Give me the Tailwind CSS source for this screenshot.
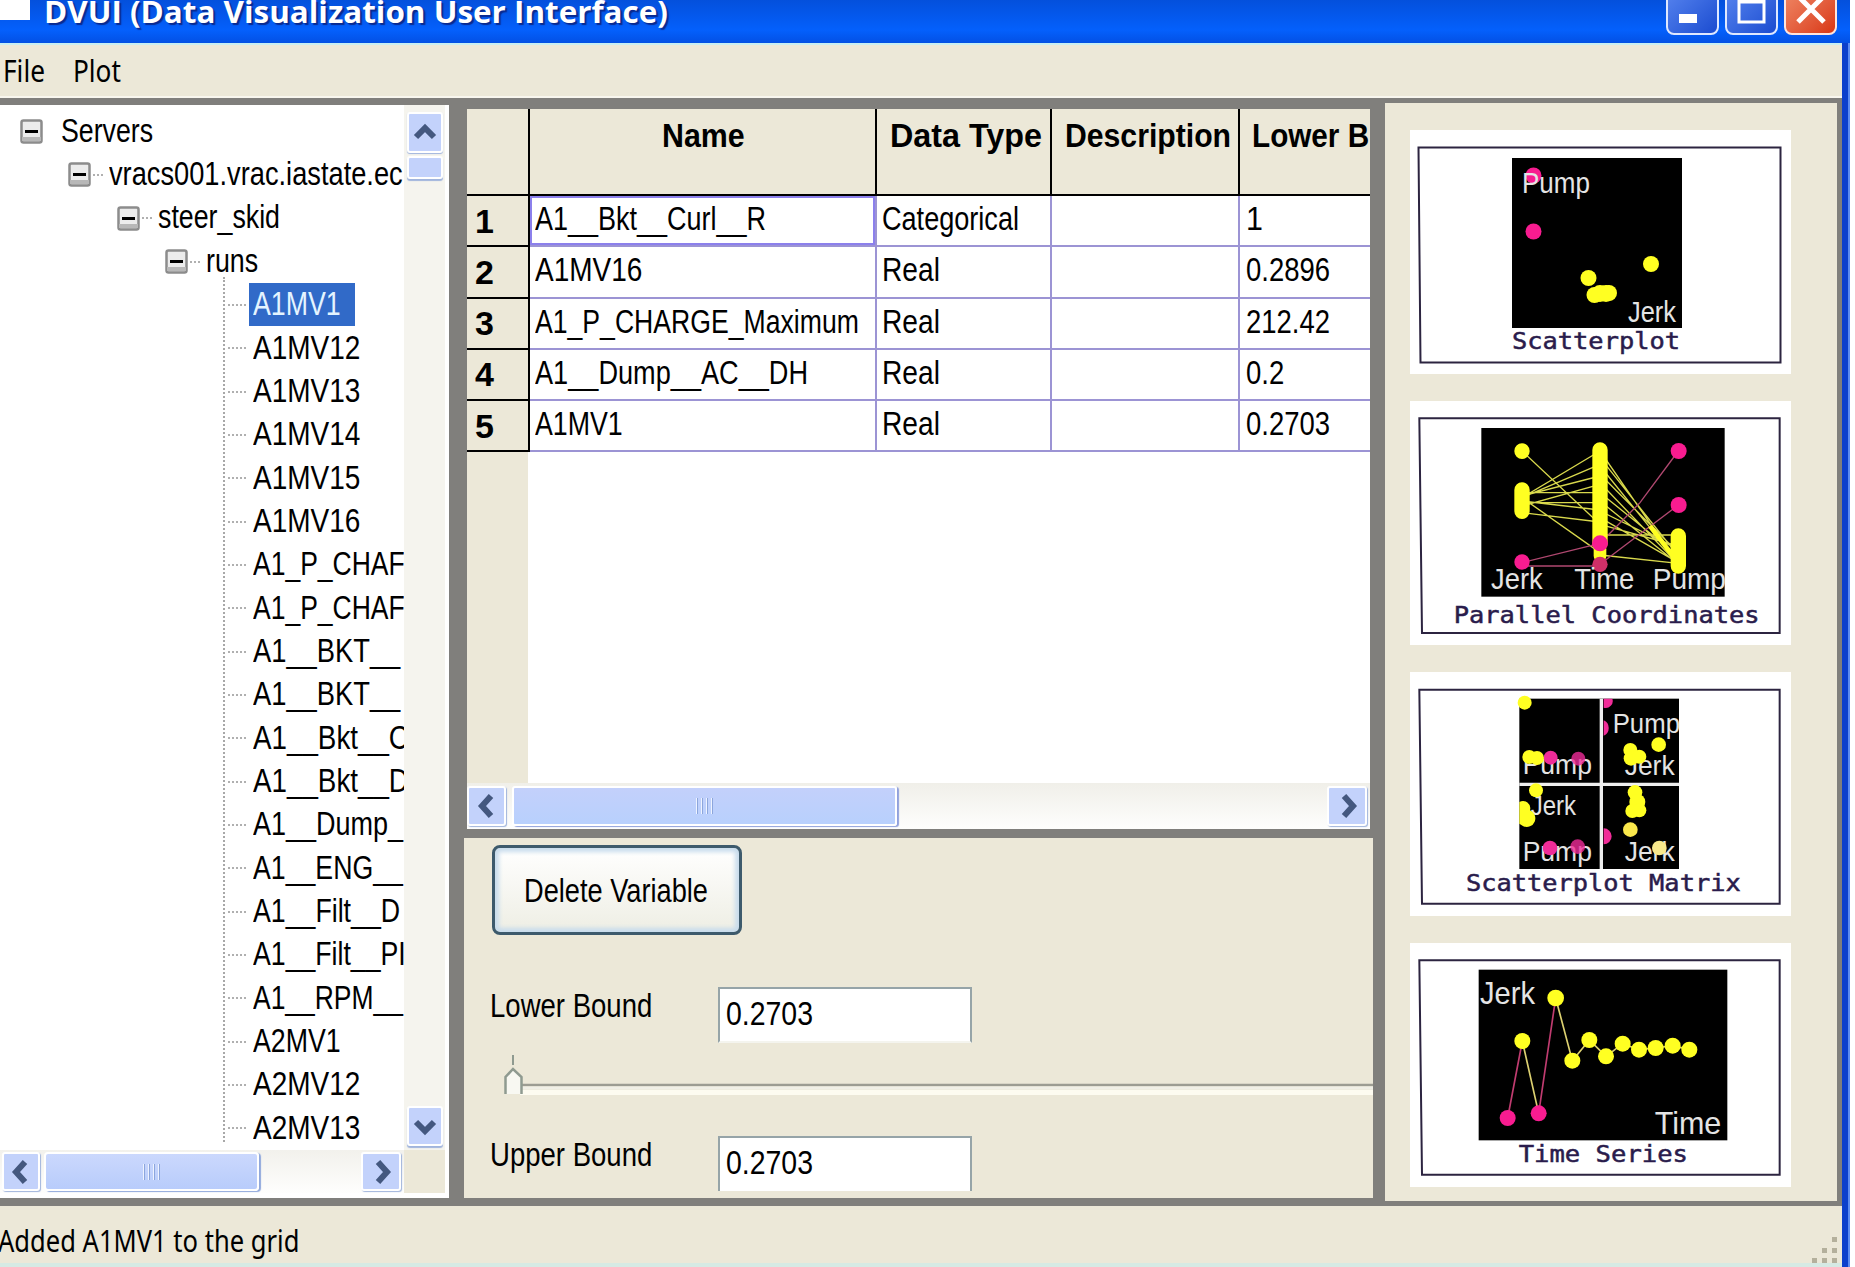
<!DOCTYPE html>
<html lang="en">
<head>
    <meta charset="UTF-8">
    <title>DVUI (Data Visualization User Interface)</title>
    <script src="https://cdn.jsdelivr.net/npm/@tailwindcss/browser@4"></script>
</head>
<body class="w-[1855px] h-[1267px] overflow-hidden bg-white font-['Liberation_Sans',sans-serif] text-[34px] leading-[34px] text-black">

<div class="w-[1850px] h-[1267px] bg-[#ece8d8] flex flex-col overflow-hidden">

    <!-- Title bar -->
    <header class="h-[43px] shrink-0 flex items-start justify-between overflow-hidden bg-linear-to-b from-[#0450dc] via-[#0460fc] via-70% to-[#0350e4] pr-[13px]">
        <div class="flex items-start">
            <div class="w-[30px] h-[20px] bg-white"></div>
            <h1 class="ml-[14px] -mt-[6px] font-['Open_Sans',sans-serif] font-bold text-[31px] text-white [text-shadow:2px_2px_1px_#0a2a90]"><span data-w="624">DVUI (Data Visualization User Interface)</span></h1>
        </div>
        <div class="flex gap-[6px] -mt-[16px]">
            <button class="w-[53px] h-[51px] rounded-[8px] border-2 border-[#dfe8ff] bg-linear-to-br from-[#5a86f0] to-[#1b4bd0]">
                <svg class="w-full h-full" viewBox="0 0 49 47"><rect x="11" y="28" width="18" height="9" fill="#fff"/></svg>
            </button>
            <button class="w-[53px] h-[51px] rounded-[8px] border-2 border-[#dfe8ff] bg-linear-to-br from-[#5a86f0] to-[#1b4bd0]">
                <svg class="w-full h-full" viewBox="0 0 49 47"><path d="M12 10h25v26h-25z" fill="none" stroke="#fff" stroke-width="3"/><path d="M11 15h27" stroke="#fff" stroke-width="5"/></svg>
            </button>
            <button class="w-[53px] h-[51px] rounded-[8px] border-2 border-[#ffe4dc] bg-linear-to-br from-[#f08a68] to-[#d83410]">
                <svg class="w-full h-full" viewBox="0 0 49 47"><path d="M12 10l26 26M38 10l-26 26" stroke="#fff" stroke-width="5"/></svg>
            </button>
        </div>
    </header>

    <div class="flex h-[1224px]">
        <div class="w-[1842px] flex flex-col">

            <!-- Menu -->
            <nav class="h-[55px] shrink-0 border-t-2 border-[#c9eef2] border-b-2 border-b-[#f8f6ee] flex items-center pl-[3px] font-['Noto_Sans',sans-serif] text-[30px]">
                <span class="w-[70px]"><span data-w="42">File</span></span>
                <span><span data-w="48">Plot</span></span>
            </nav>

            <!-- Panes -->
            <main class="h-[1108px] shrink-0 bg-[#807f7c] flex items-start">

                <!-- Server tree -->
                <section class="mt-[7px] w-[449px] h-[1093px] bg-white">
                    <div class="flex h-[1045px]">
                        <div class="relative w-[404px] h-[1045px] pt-[5px] overflow-hidden">
                            <div class="absolute left-[223px] top-[172px] h-[865px] border-l-2 border-dotted border-[#a8a8a8]"></div>
                            <div id="tree"></div>
                        </div>
                        <div class="w-[41px] h-[1045px] bg-[#f5f4ee] flex flex-col items-center">
                            <div class="mt-[7px] w-[36px] h-[41px] rounded-[3px] border-2 border-white bg-[#c3d2fb] shadow-[0_1px_1px_#a0b4dc]">
                                <svg class="w-full h-full" viewBox="0 0 32 37"><path d="M7 23l9-9 9 9" fill="none" stroke="#44587f" stroke-width="6"/></svg>
                            </div>
                            <div class="mt-[3px] w-[36px] h-[23px] rounded-[3px] border-2 border-white bg-[#c3d2fb] shadow-[0_2px_1px_#a0b4dc]"></div>
                            <div class="mt-auto mb-[4px] w-[36px] h-[40px] rounded-[3px] border-2 border-white bg-[#c3d2fb] shadow-[0_2px_1px_#a0b4dc]">
                                <svg class="w-full h-full" viewBox="0 0 32 36"><path d="M7 14l9 9 9-9" fill="none" stroke="#44587f" stroke-width="6"/></svg>
                            </div>
                        </div>
                    </div>
                    <div class="flex h-[43px]">
                        <div class="w-[404px] bg-linear-to-b from-[#f2f1ec] to-[#fefefd] flex items-center pl-[2px]">
                            <div class="w-[38px] h-[39px] rounded-[3px] border-2 border-white bg-[#c3d2fb] shadow-[1px_1px_1px_#a0b4dc]">
                                <svg class="w-full h-full" viewBox="0 0 34 35"><path d="M21 8l-9 10 9 10" fill="none" stroke="#44587f" stroke-width="6"/></svg>
                            </div>
                            <div class="ml-[4px] w-[215px] h-[39px] rounded-[4px] border-2 border-white bg-linear-to-b from-[#cbd8fd] to-[#b8ccfb] shadow-[2px_1px_1px_#90a8dc] flex items-center justify-center gap-[3px]">
                                <i class="w-[2px] h-[16px] bg-[#eef3ff] border-r border-[#8ca6dc]"></i><i class="w-[2px] h-[16px] bg-[#eef3ff] border-r border-[#8ca6dc]"></i><i class="w-[2px] h-[16px] bg-[#eef3ff] border-r border-[#8ca6dc]"></i><i class="w-[2px] h-[16px] bg-[#eef3ff] border-r border-[#8ca6dc]"></i>
                            </div>
                            <div class="ml-auto mr-[3px] w-[40px] h-[39px] rounded-[3px] border-2 border-white bg-[#c3d2fb] shadow-[1px_1px_1px_#a0b4dc]">
                                <svg class="w-full h-full" viewBox="0 0 36 35"><path d="M15 8l9 10-9 10" fill="none" stroke="#44587f" stroke-width="6"/></svg>
                            </div>
                        </div>
                        <div class="w-[41px] bg-[#ece8d8]"></div>
                    </div>
                </section>

                <!-- Variable grid and bounds -->
                <section class="ml-[15px] w-[909px] flex flex-col">
                    <div class="ml-[3px] mt-[11px] w-[903px] h-[720px] bg-white overflow-hidden flex flex-col">
                        <div class="flex h-[87px] shrink-0 bg-[#ece8d8] border-b-2 border-black font-bold">
                            <div class="w-[63px] shrink-0 border-r-2 border-black"></div>
                            <div class="w-[347px] shrink-0 border-r-2 border-black pt-[9px] pl-[132px]"><span data-w="83">Name</span></div>
                            <div class="w-[175px] shrink-0 border-r-2 border-black pt-[9px] pl-[13px]"><span data-w="152">Data Type</span></div>
                            <div class="w-[188px] shrink-0 border-r-2 border-black pt-[9px] pl-[13px]"><span data-w="166">Description</span></div>
                            <div class="w-[130px] shrink-0 pt-[9px] pl-[12px] whitespace-nowrap"><span data-w="117">Lower B</span></div>
                        </div>
                        <div id="grid"></div>
                        <div class="w-[61px] flex-1 bg-[#ece8d8]"></div>
                        <div class="h-[46px] shrink-0 bg-linear-to-b from-[#f0efe9] to-[#fefefd] flex items-center">
                            <div class="w-[39px] h-[40px] rounded-[3px] border-2 border-white bg-[#c3d2fb] shadow-[1px_1px_1px_#a0b4dc]">
                                <svg class="w-full h-full" viewBox="0 0 35 36"><path d="M22 8l-9 10 9 10" fill="none" stroke="#44587f" stroke-width="6"/></svg>
                            </div>
                            <div class="ml-[6px] w-[385px] h-[40px] rounded-[3px] border-2 border-white bg-linear-to-b from-[#c3d0fb] to-[#b8d0fd] shadow-[2px_1px_1px_#90a0dc] flex items-center justify-center gap-[3px]">
                                <i class="w-[2px] h-[16px] bg-[#eef3ff] border-r border-[#8ca6dc]"></i><i class="w-[2px] h-[16px] bg-[#eef3ff] border-r border-[#8ca6dc]"></i><i class="w-[2px] h-[16px] bg-[#eef3ff] border-r border-[#8ca6dc]"></i><i class="w-[2px] h-[16px] bg-[#eef3ff] border-r border-[#8ca6dc]"></i>
                            </div>
                            <div class="ml-auto mr-[3px] w-[40px] h-[40px] rounded-[3px] border-2 border-white bg-[#c3d2fb] shadow-[1px_1px_1px_#a0b4dc]">
                                <svg class="w-full h-full" viewBox="0 0 36 36"><path d="M15 8l9 10-9 10" fill="none" stroke="#44587f" stroke-width="6"/></svg>
                            </div>
                        </div>
                    </div>

                    <div class="mt-[9px] w-[909px] h-[360px] bg-[#ece8d8] overflow-hidden pl-[26px]">
                        <button class="mt-[7px] ml-[2px] block w-[250px] h-[90px] rounded-[8px] border-3 border-[#3d5a6c] bg-linear-to-b from-white to-[#eeeee4] shadow-[inset_0_0_4px_4px_#c8dcec] text-left pl-[29px] pb-[1px]"><span data-w="184">Delete Variable</span></button>
                        <div class="flex items-start mt-[52px] h-[56px]">
                            <label class="w-[228px] pt-[1px]"><span data-w="162">Lower Bound</span></label>
                            <div class="w-[254px] h-[56px] bg-white border-2 border-[#96a4a8] border-b-[#f4f4ee] pt-[7px] pl-[6px]"><span data-w="87">0.2703</span></div>
                        </div>
                        <svg class="block mt-[7px] ml-[12px] w-[871px] h-[50px]" viewBox="502 1050 871 50">
                            <path d="M513 1055v10" stroke="#8f9a90" stroke-width="2"/>
                            <path d="M520 1085h853" stroke="#9c9c92" stroke-width="2.5"/>
                            <path d="M520 1088h853" stroke="#f0efe6" stroke-width="3"/>
                            <path d="M520 1092.500h853" stroke="#fdfbf0" stroke-width="5"/>
                            <path d="M505.500 1094v-17l7.500-8 8.500 8v17" fill="#f8f8f2" stroke="#8f9a90" stroke-width="2.500"/>
                        </svg>
                        <div class="flex items-start mt-[36px] h-[56px]">
                            <label class="w-[228px] pt-[1px]"><span data-w="162">Upper Bound</span></label>
                            <div class="w-[254px] h-[55px] bg-white border-2 border-b-0 border-[#96a4a8] pt-[7px] pl-[6px]"><span data-w="87">0.2703</span></div>
                        </div>
                    </div>
                </section>

                <!-- Plot types -->
                <aside class="mt-[5px] ml-[12px] w-[452px] h-[1098px] bg-[#ece8d8] pl-[25px] pt-[27px] flex flex-col gap-[27px]">
                    <svg class="w-[381px] h-[244px] bg-white" viewBox="0 0 381 244">
                        <path d="M8.500 17.500h362v215h-360z" fill="none" stroke="#2c2440" stroke-width="2"/>
                        <rect x="102" y="28" width="170" height="170"/>
                        <g fill="#f81c90"><circle cx="123.500" cy="45.500" r="8"/><circle cx="123.500" cy="101.500" r="8"/></g>
                        <g fill="#ff2"><circle cx="241" cy="134" r="8"/><circle cx="178.500" cy="148" r="8"/><circle cx="184.500" cy="165" r="8"/><circle cx="190" cy="163.500" r="8.500"/><circle cx="196" cy="163.500" r="8.500"/><circle cx="199" cy="163" r="8"/></g>
                        <g fill="#e4e4e4" font-family="Liberation Sans, sans-serif" font-size="29">
                            <text x="112" y="63" textLength="68" lengthAdjust="spacingAndGlyphs">Pump</text>
                            <text x="218" y="192" textLength="48" lengthAdjust="spacingAndGlyphs">Jerk</text>
                        </g>
                        <text x="102" y="219" textLength="168" lengthAdjust="spacingAndGlyphs" font-family="DejaVu Sans Mono, monospace" font-size="23" fill="#2a1c4c" stroke="#2a1c4c" stroke-width=".5">Scatterplot</text>
                    </svg>

                    <svg class="w-[381px] h-[244px] bg-white" viewBox="30 35 1143 732">
                        <path d="M58 87h1081v644H66z" fill="none" stroke="#2c2440" stroke-width="6"/>
                        <rect x="244" y="116" width="730" height="506"/>
                        <g stroke="#d8d84c" stroke-width="4" fill="none">
                            <path d="M366 185L600 405M366 325L600 185M366 325L600 225M366 320L600 260M366 310H600M366 350L600 285M366 340L600 340M366 335L600 362M366 370L600 398M366 325L600 490"/>
                            <path d="M600 185L835 525M600 205L835 500M600 230L835 520M600 255L835 490M600 280L835 525M600 310L835 500M600 335L835 525M600 365L835 480M600 385L835 520M600 405L835 470M600 437H835M600 497L835 522"/>
                        </g>
                        <path d="M366 520L600 462M366 530H600M600 462L720 340L835 185M600 525L835 347" stroke="#b04870" stroke-width="4" fill="none"/>
                        <g stroke="#ff2" stroke-width="46" stroke-linecap="round">
                            <path d="M366 185v1M366 302v64M600 182v280M835 440v90"/>
                            <path d="M600 480v20" stroke-width="38"/>
                        </g>
                        <path d="M750 410l80 105" stroke="#ff2" stroke-width="14"/>
                        <g fill="#f81c90"><circle cx="366" cy="518" r="23"/><circle cx="600" cy="462" r="24"/><circle cx="600" cy="525" r="23" fill="#d03068"/><circle cx="836" cy="185" r="24"/><circle cx="836" cy="347" r="24"/></g>
                        <g fill="#e4e4e4" font-family="Liberation Sans, sans-serif" font-size="87">
                            <text x="273" y="598" textLength="155" lengthAdjust="spacingAndGlyphs">Jerk</text>
                            <text x="523" y="598" textLength="180" lengthAdjust="spacingAndGlyphs">Time</text>
                            <text x="758" y="598" textLength="220" lengthAdjust="spacingAndGlyphs">Pump</text>
                        </g>
                        <text x="161" y="700" textLength="918" lengthAdjust="spacingAndGlyphs" font-family="DejaVu Sans Mono, monospace" font-size="69" fill="#2a1c4c" stroke="#2a1c4c" stroke-width="1.500">Parallel Coordinates</text>
                    </svg>

                    <svg class="w-[381px] h-[244px] bg-white" viewBox="30 38 1143 732">
                        <path d="M58 91h1081v642H66z" fill="none" stroke="#2c2440" stroke-width="6"/>
                        <rect x="358" y="118" width="479" height="511"/>
                        <path d="M604 118v511M358 375h479" stroke="#eee" stroke-width="10"/>
                        <g fill="#e4e4e4" font-family="Liberation Sans, sans-serif" font-size="84">
                            <text x="368" y="345" textLength="208" lengthAdjust="spacingAndGlyphs">Pump</text>
                            <text x="638" y="222" textLength="202" lengthAdjust="spacingAndGlyphs">Pump</text>
                            <text x="674" y="346" textLength="150" lengthAdjust="spacingAndGlyphs">Jerk</text>
                            <text x="392" y="467" textLength="136" lengthAdjust="spacingAndGlyphs">Jerk</text>
                            <text x="368" y="605" textLength="208" lengthAdjust="spacingAndGlyphs">Pump</text>
                            <text x="674" y="605" textLength="150" lengthAdjust="spacingAndGlyphs">Jerk</text>
                        </g>
                        <g fill="#f02c98"><path d="M611 118h26a21 21 0 0 1-26 27zM611 183a25 25 0 0 1 0 46zM611 507a24 24 0 0 1 0 48z"/><circle cx="452" cy="295" r="21"/><circle cx="535" cy="298" r="21" fill-opacity=".8"/><circle cx="450" cy="566" r="22"/><circle cx="533" cy="562" r="22" fill-opacity=".8"/></g>
                        <g fill="#ff2"><circle cx="374" cy="130" r="21"/><circle cx="388" cy="293" r="21"/><circle cx="411" cy="296" r="21"/><circle cx="776" cy="256" r="22"/><circle cx="691" cy="272" r="21"/><circle cx="693" cy="297" r="22"/><circle cx="718" cy="292" r="21"/><circle cx="408" cy="393" r="21"/><path d="M358 428a22 22 0 0 1 32 25a23 23 0 1 1-20 48l-12-8z"/><circle cx="705" cy="399" r="22"/><circle cx="712" cy="428" r="24"/><circle cx="697" cy="455" r="21"/><circle cx="718" cy="453" r="21"/><circle cx="691" cy="511" r="22" fill="#fbe84c"/><circle cx="778" cy="566" r="22" fill="#f8e88c"/></g>
                        <text x="198" y="696" textLength="824" lengthAdjust="spacingAndGlyphs" font-family="DejaVu Sans Mono, monospace" font-size="69" fill="#2a1c4c" stroke="#2a1c4c" stroke-width="1.500">Scatterplot Matrix</text>
                    </svg>

                    <svg class="w-[381px] h-[244px] bg-white" viewBox="30 41 1143 732">
                        <path d="M58 93h1081v643H66z" fill="none" stroke="#2c2440" stroke-width="6"/>
                        <rect x="236" y="121" width="746" height="512"/>
                        <path d="M323 566L367 335M416 552L467 206" stroke="#c03c70" stroke-width="5"/>
                        <path d="M367 335L416 552M467 206L517 394L568 332L618 381L668 343L717 361L767 356L818 349L868 361" fill="none" stroke="#dcd070" stroke-width="5"/>
                        <g fill="#ff2"><circle cx="367" cy="335" r="24"/><circle cx="467" cy="206" r="25"/><circle cx="517" cy="394" r="24"/><circle cx="568" cy="332" r="24"/><circle cx="618" cy="381" r="24"/><circle cx="668" cy="343" r="24"/><circle cx="717" cy="361" r="24"/><circle cx="767" cy="356" r="24"/><circle cx="818" cy="349" r="24"/><circle cx="868" cy="361" r="24"/></g>
                        <g fill="#f81c90"><circle cx="323" cy="566" r="24"/><circle cx="416" cy="552" r="24"/></g>
                        <g fill="#e4e4e4" font-family="Liberation Sans, sans-serif" font-size="94">
                            <text x="240" y="224" textLength="165" lengthAdjust="spacingAndGlyphs">Jerk</text>
                            <text x="764" y="615" textLength="200" lengthAdjust="spacingAndGlyphs">Time</text>
                        </g>
                        <text x="356" y="698" textLength="508" lengthAdjust="spacingAndGlyphs" font-family="DejaVu Sans Mono, monospace" font-size="69" fill="#2a1c4c" stroke="#2a1c4c" stroke-width="1.500">Time Series</text>
                    </svg>
                </aside>
            </main>

            <!-- Status bar -->
            <footer class="h-[61px] shrink-0 border-b-4 border-[#d6eae4] flex items-start justify-between font-['Noto_Sans',sans-serif] text-[31px]">
                <div class="-ml-[2px] pt-[17px]"><span data-w="301">Added A1MV1 to the grid</span></div>
                <svg class="w-[34px] h-[34px] mt-[28px]" viewBox="0 0 34 34" fill="#b4b09c">
                    <path d="M24 3h5v5h-5zM14 14h5v5h-5zM24 14h5v5h-5zM4 24h5v5H4zM14 24h5v5h-5zM24 24h5v5h-5z"/>
                </svg>
            </footer>
        </div>

        <!-- Window frame, right side -->
        <div class="w-[8px] bg-[#0c40cc] border-r-2 border-[#5c8cf0]"></div>
    </div>
</div>

<script>
    const branches = [
        ["Servers", 92], ["vracs001.vrac.iastate.ec", 294], ["steer_skid", 122], ["runs", 52]
    ];
    const leaves = [
        ["A1MV1", 88], ["A1MV12", 107], ["A1MV13", 107], ["A1MV14", 107], ["A1MV15", 107], ["A1MV16", 107],
        ["A1_P_CHAF", 152], ["A1_P_CHAF", 152], ["A1__BKT__", 147], ["A1__BKT__", 147],
        ["A1__Bkt__C", 156], ["A1__Bkt__D", 156], ["A1__Dump_", 150], ["A1__ENG__", 150],
        ["A1__Filt__D", 147], ["A1__Filt__PI", 153], ["A1__RPM__", 150],
        ["A2MV1", 88], ["A2MV12", 107], ["A2MV13", 107]
    ];
    const variables = [
        ["A1__Bkt__Curl__R", 231, "Categorical", 137, "1", 17],
        ["A1MV16", 107, "Real", 58, "0.2896", 84],
        ["A1_P_CHARGE_Maximum", 324, "Real", 58, "212.42", 84],
        ["A1__Dump__AC__DH", 273, "Real", 58, "0.2", 38],
        ["A1MV1", 88, "Real", 58, "0.2703", 84]
    ];

    const indent = ["pl-[20px]", "pl-[68px]", "pl-[117px]", "pl-[165px]"];
    const box = '<svg class="w-[23px] h-[25px] shrink-0" viewBox="0 0 23 25"><rect x="1.5" y="1.5" width="20" height="22" rx="2" fill="#ececec" stroke="#8c8c8c" stroke-width="2.5"/><path d="M2 20h19" stroke="#b8b8b8" stroke-width="4"/><path d="M5 12.500h13" stroke="#000" stroke-width="3"/></svg>';

    let tree = "";
    branches.forEach(([name, w], i) => {
        const dots = i ? "border-b-2 border-dotted border-[#b0b0b0]" : "";
        tree += `<div class="flex items-center h-[43.33px] whitespace-nowrap ${indent[i]}">${box}
            <i class="w-[10px] ml-[2px] mr-[6px] shrink-0 ${dots}"></i><span class="pb-[4px]"><span data-w="${w}">${name}</span></span></div>`;
    });
    leaves.forEach(([name, w], i) => {
        const mark = i === 0 ? "w-[106px] shrink-0 bg-[#316ac8] text-[#e4f4ff]" : "";
        tree += `<div class="flex items-center h-[43.33px] whitespace-nowrap pl-[228px]">
            <i class="w-[18px] mr-[3px] shrink-0 border-b-2 border-dotted border-[#b0b0b0]"></i><span class="h-[43px] pt-[3px] pl-[4px] ${mark}"><span data-w="${w}">${name}</span></span></div>`;
    });
    document.getElementById("tree").innerHTML = tree;

    let rows = "";
    variables.forEach(([name, w1, type, w2, lower, w3], i) => {
        const cell = "shrink-0 flex items-center pb-[5px] border-b-2 border-[#9c94d4]";
        const sel = i === 0 ? "shadow-[inset_0_0_0_2px_#8c80ec]" : "";
        rows += `<div class="flex h-[51.25px] whitespace-nowrap">
            <div class="w-[63px] shrink-0 flex items-center pl-[8px] bg-[#ece8d8] border-r-2 border-b-2 border-black font-bold"><span data-w="19">${i + 1}</span></div>
            <div class="w-[347px] pl-[5px] border-r-2 ${cell} ${sel}"><span data-w="${w1}">${name}</span></div>
            <div class="w-[175px] pl-[5px] border-r-2 ${cell}"><span data-w="${w2}">${type}</span></div>
            <div class="w-[188px] border-r-2 ${cell}"></div>
            <div class="w-[130px] pl-[6px] ${cell}"><span data-w="${w3}">${lower}</span></div>
        </div>`;
    });
    document.getElementById("grid").innerHTML = rows;

    // Condense each label to its width, again whenever its own size changes
    const fit = el => {
        if (el.offsetWidth) el.style.transform = `scaleX(${el.dataset.w / el.offsetWidth})`;
    };
    const observer = new ResizeObserver(entries => entries.forEach(entry => fit(entry.target)));
    document.querySelectorAll("[data-w]").forEach(el => {
        el.classList.add("inline-block", "origin-left", "whitespace-nowrap", "shrink-0");
        fit(el);
        observer.observe(el);
    });
    window.addEventListener("load", () => document.querySelectorAll("[data-w]").forEach(fit));
</script>

</body>
</html>
